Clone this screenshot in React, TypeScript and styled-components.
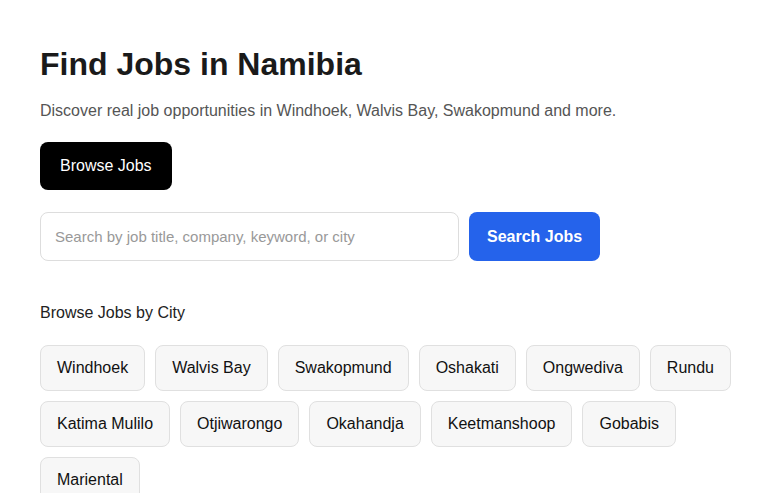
import styled, { createGlobalStyle } from "styled-components";

const GlobalStyle = createGlobalStyle`
    * {
        box-sizing: border-box;
    }
    body {
        margin: 0;
        background: #ffffff;
        font-family: "Liberation Sans", Arial, sans-serif;
        color: #111111;
    }
`;

const Page = styled.main`
    padding: 45px 40px 40px;
    max-width: 780px;
`;

const Title = styled.h1`
    margin: 0;
    font-size: 32px;
    line-height: 1.2;
    font-weight: 700;
    color: #1a1a1a;
`;

const Subtitle = styled.p`
    margin: 16px 0 0;
    font-size: 16px;
    line-height: 1.5;
    color: #555555;
`;

const PrimaryButton = styled.button`
    margin-top: 19px;
    height: 48px;
    padding: 0 20px;
    border: none;
    border-radius: 8px;
    background: #000000;
    color: #ffffff;
    font-family: inherit;
    font-size: 16px;
    cursor: pointer;
`;

const SearchRow = styled.form`
    display: flex;
    gap: 10px;
    margin-top: 22px;
`;

const SearchInput = styled.input`
    width: 419px;
    height: 49px;
    padding: 0 14px;
    border: 1px solid #dddddd;
    border-radius: 8px;
    font-family: inherit;
    font-size: 15px;
    color: #111111;
    outline: none;
    &::placeholder {
        color: #999999;
    }
`;

const SearchButton = styled.button`
    height: 49px;
    padding: 0 18px;
    border: none;
    border-radius: 8px;
    background: #2563eb;
    color: #ffffff;
    font-family: inherit;
    font-size: 16px;
    font-weight: 700;
    cursor: pointer;
`;

const SectionTitle = styled.h2`
    margin: 40px 0 0;
    font-size: 16px;
    line-height: 1.5;
    font-weight: 400;
    color: #222222;
`;

const CityList = styled.div`
    display: flex;
    flex-wrap: wrap;
    gap: 10px;
    margin-top: 20px;
    max-width: 700px;
`;

const CityChip = styled.button`
    display: flex;
    align-items: center;
    height: 46px;
    padding: 0 16px;
    border: 1px solid #e0e0e0;
    border-radius: 8px;
    background: #f7f7f7;
    color: #111111;
    font-family: inherit;
    font-size: 16px;
    cursor: pointer;
`;

const cities = [
    "Windhoek",
    "Walvis Bay",
    "Swakopmund",
    "Oshakati",
    "Ongwediva",
    "Rundu",
    "Katima Mulilo",
    "Otjiwarongo",
    "Okahandja",
    "Keetmanshoop",
    "Gobabis",
    "Mariental",
];

const App = () => {
    return (
        <>
            <GlobalStyle />
            <Page>
                <Title>Find Jobs in Namibia</Title>
                <Subtitle>
                    Discover real job opportunities in Windhoek, Walvis Bay,
                    Swakopmund and more.
                </Subtitle>
                <PrimaryButton>Browse Jobs</PrimaryButton>
                <SearchRow onSubmit={(e) => e.preventDefault()}>
                    <SearchInput placeholder="Search by job title, company, keyword, or city" />
                    <SearchButton type="submit">Search Jobs</SearchButton>
                </SearchRow>
                <SectionTitle>Browse Jobs by City</SectionTitle>
                <CityList>
                    {cities.map((city) => (
                        <CityChip key={city}>{city}</CityChip>
                    ))}
                </CityList>
            </Page>
        </>
    );
};

export default App;
